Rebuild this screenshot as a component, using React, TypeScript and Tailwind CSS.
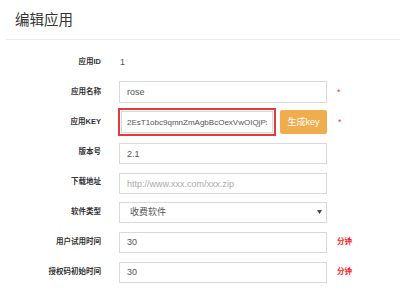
import React from "react";

const FONT = "font-['Liberation_Sans','Noto_Sans_CJK_SC',sans-serif]";

function Label({ children }: { children: React.ReactNode }) {
  return (
    <div className="w-[101px] shrink-0 text-right text-[7.5px] font-bold text-[#333] leading-none">
      {children}
    </div>
  );
}

function TextInput({ value, placeholder, tall }: { value?: string; placeholder?: string; tall?: boolean }) {
  return (
    <input
      readOnly
      value={value ?? ""}
      placeholder={placeholder}
      className={`w-[208px] ${tall ? "h-[22px]" : "h-[21px]"} border border-[#d9d9d9] bg-white px-[7px] text-[9px] text-[#555] placeholder:text-[#aaa] outline-none ${FONT}`}
    />
  );
}

function Row({ children }: { children: React.ReactNode }) {
  return <div className="flex h-[30px] items-center">{children}</div>;
}

function Star() {
  return <span className="ml-[10px] text-[9px] leading-none text-[#f33]">*</span>;
}

function Unit() {
  return <span className="ml-[10px] text-[7.5px] font-bold leading-none text-[#f22]">分钟</span>;
}

export default function App() {
  return (
    <div className={`w-[400px] h-[293px] overflow-hidden bg-white ${FONT}`}>
      <div className="h-[39px] pl-[15px] pt-[9px] text-[14.5px] leading-[22px] text-[#333]">编辑应用</div>
      <div className="ml-[6px] border-t border-[#ececec]" />
      <div className="flex flex-col pt-[7px]">
        <Row>
          <Label>应用ID</Label>
          <span className="ml-[19px] text-[9px] leading-none text-[#555]">1</span>
        </Row>
        <Row>
          <Label>应用名称</Label>
          <div className="ml-[18px] flex items-center">
            <TextInput value="rose" tall />
            <Star />
          </div>
        </Row>
        <Row>
          <Label>应用KEY</Label>
          <div className="ml-[17px] flex items-center">
            <div className="w-[158px] border-2 border-[#e8383d] p-[1px]">
              <input
                readOnly
                value="2EsT1obc9qmnZmAgbBcOexVwOIQjPxk8RtY3"
                className={`block w-full h-[22px] border border-[#d9d9d9] bg-white px-[5px] text-[8px] text-[#555] outline-none ${FONT}`}
              />
            </div>
            <button className="ml-[4px] h-[24px] w-[47px] rounded-[2px] bg-[#f0ad4e] text-[9px] leading-none text-white">
              生成key
            </button>
            <span className="ml-[11px] text-[9px] leading-none text-[#f33]">*</span>
          </div>
        </Row>
        <Row>
          <Label>版本号</Label>
          <div className="ml-[18px]">
            <TextInput value="2.1" />
          </div>
        </Row>
        <Row>
          <Label>下载地址</Label>
          <div className="ml-[18px]">
            <TextInput placeholder="http://www.xxx.com/xxx.zip" />
          </div>
        </Row>
        <Row>
          <Label>软件类型</Label>
          <div className="ml-[18px] flex h-[21px] w-[208px] items-center justify-between border border-[#d9d9d9] bg-white pl-[10px] pr-[4px]">
            <span className="text-[9px] leading-none text-[#555]">收费软件</span>
            <svg width="5" height="4" viewBox="0 0 5 4">
              <path d="M0 0 L5 0 L2.5 4 Z" fill="#444" />
            </svg>
          </div>
        </Row>
        <Row>
          <Label>用户试用时间</Label>
          <div className="ml-[18px] flex items-center">
            <TextInput value="30" />
            <Unit />
          </div>
        </Row>
        <Row>
          <Label>授权码初始时间</Label>
          <div className="ml-[18px] flex items-center">
            <TextInput value="30" />
            <Unit />
          </div>
        </Row>
      </div>
    </div>
  );
}
